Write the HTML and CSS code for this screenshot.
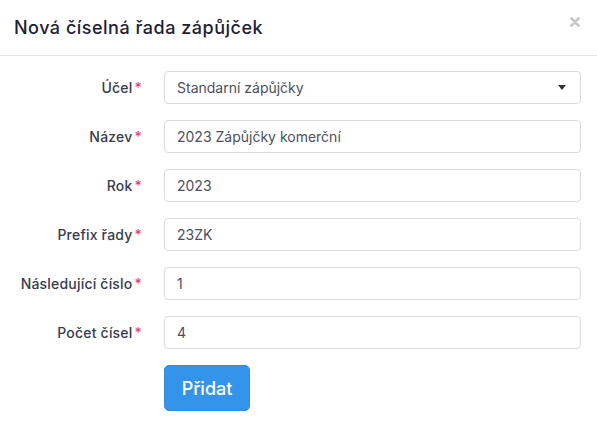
FILE: index.html
```html
<!DOCTYPE html>
<html lang="cs">
<head>
<meta charset="utf-8">
<link rel="stylesheet" href="styles.css">
</head>
<body>
<div class="modal">
  <div class="modal-header">
    <h1 class="title">Nová číselná řada zápůjček</h1>
    <svg class="close" width="10" height="10" viewBox="0 0 10 10"><path d="M1.5 1.5 L8.5 8.5 M8.5 1.5 L1.5 8.5" stroke="#c8c8c8" stroke-width="2.8" stroke-linecap="round"/></svg>
  </div>
  <form class="form">
    <label class="label">Účel<span class="req">*</span></label>
    <div class="field select">Standarní zápůjčky<span class="caret"></span></div>
    <label class="label">Název<span class="req">*</span></label>
    <div class="field">2023 Zápůjčky komerční</div>
    <label class="label">Rok<span class="req">*</span></label>
    <div class="field">2023</div>
    <label class="label">Prefix řady<span class="req">*</span></label>
    <div class="field">23ZK</div>
    <label class="label">Následující číslo<span class="req">*</span></label>
    <div class="field">1</div>
    <label class="label">Počet čísel<span class="req">*</span></label>
    <div class="field">4</div>
    <span></span>
    <div class="actions"><button type="button" class="btn">Přidat</button></div>
  </form>
</div>
</body>
</html>
```
FILE: styles.css
```css
* { box-sizing: border-box; }
html, body { margin: 0; padding: 0; background: #fff; }
body { font-family: "Inter", "Open Sans", sans-serif; color: #2b2e40; }
.modal { width: 597px; height: 441px; background: #fff; }
.modal-header {
  height: 56px;
  border-bottom: 1px solid #e5e5e5;
  display: flex;
  align-items: center;
  justify-content: space-between;
  padding: 0 17px 0 14px;
}
.title { margin: 0; font-size: 18px; font-weight: 500; color: #1d2133; letter-spacing: 0.5px; }
.close { margin-top: -12px; }
.form {
  display: grid;
  grid-template-columns: 142px 1fr;
  column-gap: 22px;
  row-gap: 16px;
  padding: 15px 16px 0 0;
  align-items: center;
}
.label {
  text-align: right;
  font-size: 14px;
  font-weight: 500;
  color: #383b4d;
  letter-spacing: 0.2px;
}
.req { color: #e9436b; margin-left: 2px; }
.field {
  height: 33px;
  border: 1px solid #dcdcdc;
  border-radius: 4px;
  padding: 0 12px;
  display: flex;
  align-items: center;
  font-size: 14px;
  color: #4d4f5c;
}
.select { justify-content: space-between; }
.caret {
  width: 0; height: 0;
  border-left: 4px solid transparent;
  border-right: 4px solid transparent;
  border-top: 5px solid #333;
  margin-right: 2px;
}
.btn {
  width: 86px;
  height: 46px;
  background: #3494e9;
  border: 1px solid #2f8ae0;
  border-radius: 5px;
  color: #fff;
  font-family: inherit;
  font-size: 18px;
  font-weight: 500;
  padding: 0;
}
```
